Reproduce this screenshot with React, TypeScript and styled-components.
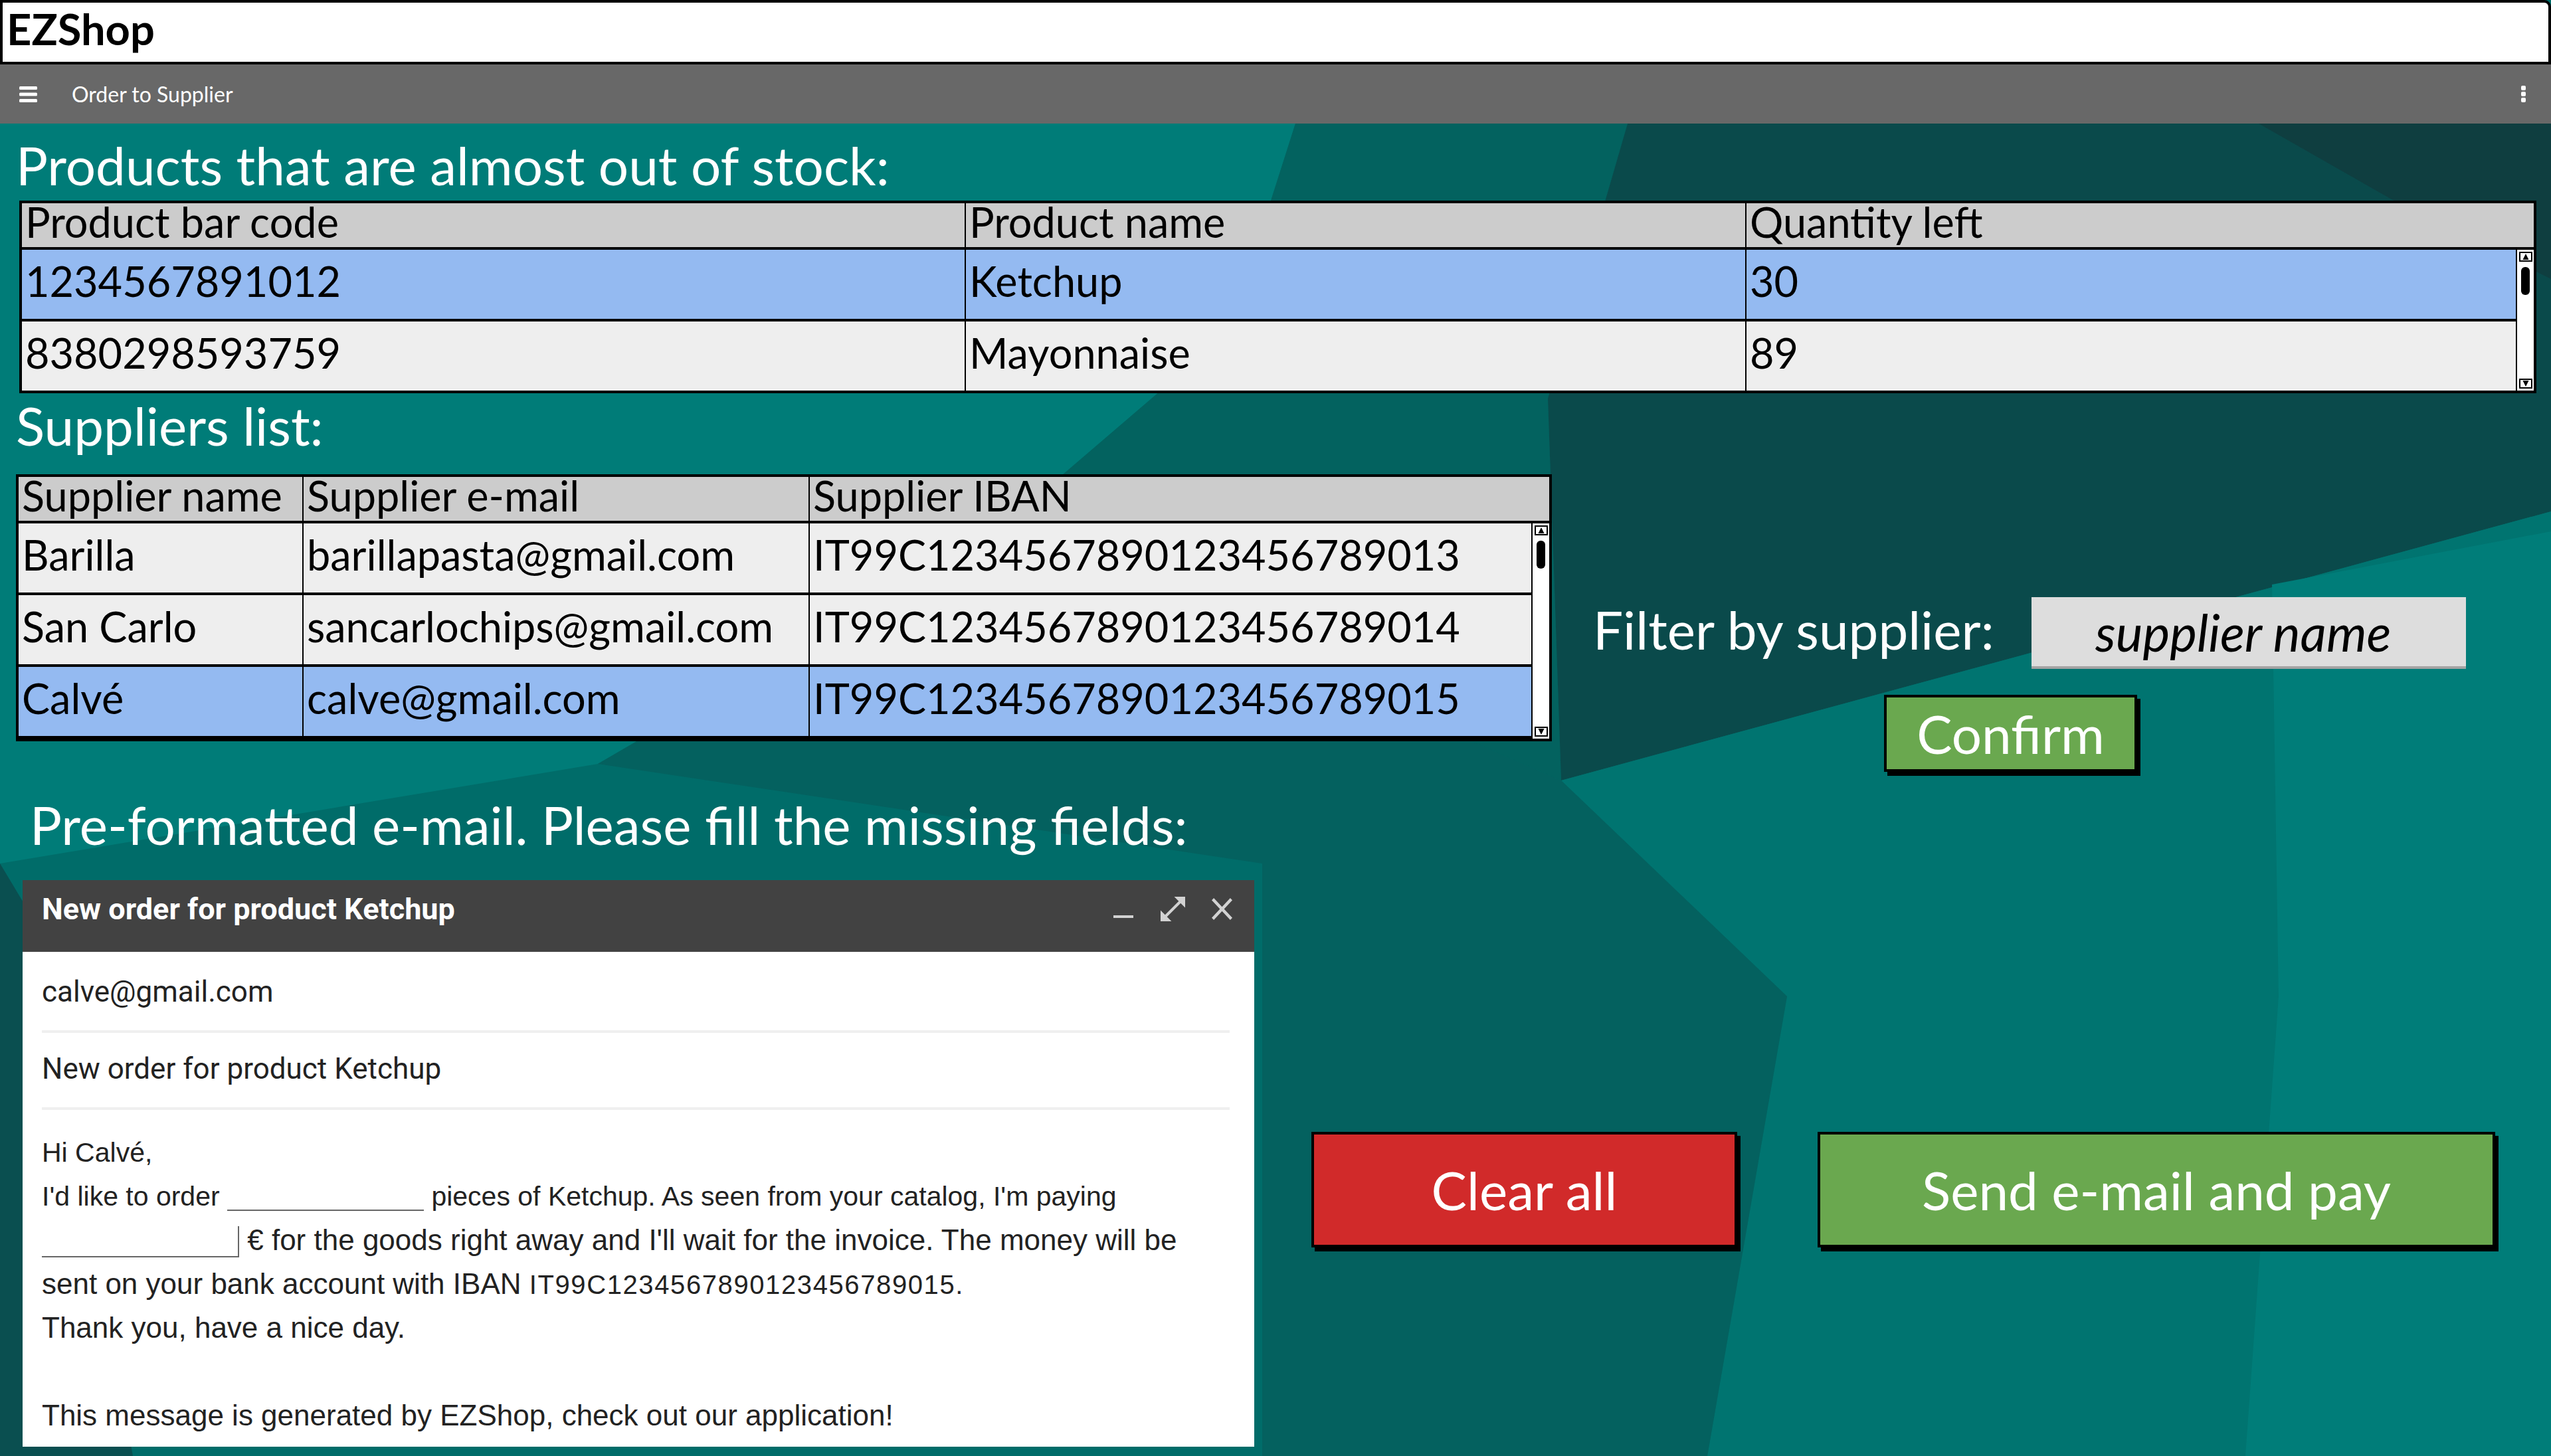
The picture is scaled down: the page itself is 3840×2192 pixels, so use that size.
import React from "react";
import styled, { createGlobalStyle } from "styled-components";

const GlobalStyle = createGlobalStyle`
  html, body { margin: 0; padding: 0; }
  body { background: #006c69; font-family: "Lato", "Liberation Sans", sans-serif; }
  * { box-sizing: border-box; }
`;

const Page = styled.div`
  width: 3840px;
  height: 2192px;
  display: flex;
  flex-direction: column;
  overflow: hidden;
`;

const TitleBar = styled.header`
  height: 97px;
  flex: none;
  background: #fff;
  border: 4px solid #000;
  border-top-right-radius: 10px;
  padding: 0 6px;
  display: flex;
  align-items: flex-start;
`;

const AppName = styled.h1`
  margin: 0;
  font: 700 65px/1.2 "Lato", sans-serif;
  color: #000;
`;

const NavBar = styled.nav`
  height: 89px;
  flex: none;
  background: #686868;
  display: flex;
  align-items: center;
  padding: 0 38px 0 29px;
`;

const NavTitle = styled.span`
  flex: 1;
  margin-left: 52px;
  font: 400 32px "Lato", sans-serif;
  color: #fff;
`;

const Main = styled.main`
  position: relative;
  flex: 1;
`;

const Backdrop = styled.svg`
  position: absolute;
  inset: 0;
  width: 100%;
  height: 100%;
`;

const Content = styled.div`
  position: relative;
  display: flex;
  flex-direction: column;
  align-items: flex-start;
  padding: 14px 0 0 24px;
`;

const SectionTitle = styled.h2<{ $indent?: number }>`
  margin: 0 0 0 ${(p) => p.$indent ?? 0}px;
  font: 400 80px/96px "Lato", sans-serif;
  color: #fff;
  white-space: nowrap;
`;

const Table = styled.div<{ $width: number; $left: number; $top: number }>`
  width: ${(p) => p.$width}px;
  margin: ${(p) => p.$top}px 0 0 ${(p) => p.$left}px;
  border: 4px solid #000;
  background: #eee;
  flex: none;
`;

const Row = styled.div<{ $cols: string; $bg: string }>`
  display: grid;
  grid-template-columns: ${(p) => p.$cols};
  background: ${(p) => p.$bg};
  & + & {
    border-top: 4px solid #000;
  }
`;

const HeadRow = styled(Row)`
  border-bottom: 4px solid #000;
`;

const Cell = styled.div`
  font: 400 63px/94px "Lato", sans-serif;
  color: #000;
  height: 104px;
  padding: 0 0 10px 5px;
  white-space: nowrap;
  & + & {
    border-left: 2px solid #000;
  }
`;

const HeadCell = styled(Cell)`
  height: 66px;
  line-height: 56px;
  padding-bottom: 10px;
`;

const DataArea = styled.div<{ $height?: number }>`
  display: flex;
  height: ${(p) => (p.$height ? `${p.$height}px` : "auto")};
  overflow: hidden;
`;

const Rows = styled.div`
  flex: 1;
  min-width: 0;
`;

const ScrollTrack = styled.div`
  width: 27px;
  flex: none;
  background: #fff;
  border-left: 2px solid #000;
  display: flex;
  flex-direction: column;
  align-items: center;
  padding: 3px 0;
`;

const ScrollArrow = styled.svg`
  width: 20px;
  height: 15px;
  flex: none;
`;

const ScrollThumb = styled.div`
  width: 13px;
  height: 42px;
  margin-top: 8px;
  border-radius: 6px;
  background: #000;
  flex: none;
`;

const ScrollGap = styled.div`
  flex: 1;
`;

const SuppliersRow = styled.div`
  display: flex;
  align-items: flex-start;
`;

const FilterPanel = styled.div`
  margin: 211px 0 0 62px;
  display: flex;
  flex-direction: column;
  align-items: flex-start;
`;

const FilterLine = styled.div`
  display: flex;
  align-items: flex-start;
  gap: 56px;
`;

const FilterLabel = styled.span`
  font: 400 80px/96px "Lato", sans-serif;
  color: #fff;
  white-space: nowrap;
`;

const FilterInput = styled.div`
  width: 654px;
  height: 108px;
  background: #ddd;
  border-bottom: 4px solid #a3a3a3;
  display: flex;
  align-items: center;
  justify-content: center;
  font: italic 400 77px "Lato", sans-serif;
  color: #000;
  padding-right: 16px;
`;

const ActionButton = styled.div<{ $bg: string; $w: number; $h: number }>`
  width: ${(p) => p.$w}px;
  height: ${(p) => p.$h}px;
  flex: none;
  background: ${(p) => p.$bg};
  border: 4px solid #000;
  box-shadow: 5px 6px 0 #000;
  display: flex;
  align-items: center;
  justify-content: center;
  font: 400 80px "Lato", sans-serif;
  color: #fff;
  white-space: nowrap;
`;

const ConfirmWrap = styled.div`
  margin: 39px 0 0 438px;
`;

const BottomRow = styled.div`
  display: flex;
  align-items: flex-start;
  margin-top: 31px;
`;

const EmailColumn = styled.div`
  width: 1864px;
  display: flex;
  flex-direction: column;
  align-items: flex-start;
`;

const ButtonRow = styled.div`
  display: flex;
  gap: 121px;
  margin: 511px 0 0 86px;
`;

const EmailWindow = styled.section`
  width: 1854px;
  height: 853px;
  margin: 36px 0 0 10px;
  background: #fff;
  display: flex;
  flex-direction: column;
`;

const EmailHeader = styled.div`
  height: 108px;
  flex: none;
  background: #424242;
  display: flex;
  align-items: center;
  padding: 0 33px 22px 29px;
`;

const EmailTitle = styled.span`
  flex: 1;
  font: 700 45px "Roboto", "Liberation Sans", sans-serif;
  color: #fff;
  white-space: nowrap;
`;

const WindowIcons = styled.div`
  display: flex;
  align-items: center;
  gap: 40px;
  color: #d2d2d2;
`;

const Field = styled.div<{ $top: number }>`
  margin: 0 37px 0 29px;
  padding: ${(p) => p.$top}px 0 32px;
  border-bottom: 4px solid #efefef;
  font: 400 44px/52px "Roboto", "Liberation Sans", sans-serif;
  color: #222;
  white-space: nowrap;
`;

const EmailBody = styled.div`
  padding: 31px 0 0 29px;
  font-family: "Liberation Sans", Arial, sans-serif;
  color: #222;
`;

const BodyLine = styled.div<{ $size?: number }>`
  font-size: ${(p) => p.$size ?? 44}px;
  line-height: 66px;
  height: 66px;
  white-space: nowrap;
`;

const Blank = styled.span<{ $w: number; $h: number; $drop: number; $bar?: boolean }>`
  display: inline-block;
  width: ${(p) => p.$w}px;
  height: ${(p) => p.$h}px;
  vertical-align: -${(p) => p.$drop}px;
  border-bottom: 2px solid #666;
  border-right: ${(p) => (p.$bar ? "2px solid #666" : "none")};
`;

const Iban = styled.span`
  font-size: 40px;
  letter-spacing: 1.6px;
`;

const HamburgerIcon = () => (
  <svg width="27" height="24" viewBox="0 0 27 24">
    <rect x="0" y="0" width="27" height="5" rx="1.5" fill="#fff" />
    <rect x="0" y="9.5" width="27" height="5" rx="1.5" fill="#fff" />
    <rect x="0" y="19" width="27" height="5" rx="1.5" fill="#fff" />
  </svg>
);

const KebabIcon = () => (
  <svg width="7" height="25" viewBox="0 0 7 25">
    <rect x="0" y="0" width="7" height="7" rx="2" fill="#fff" />
    <rect x="0" y="9" width="7" height="7" rx="2" fill="#fff" />
    <rect x="0" y="18" width="7" height="7" rx="2" fill="#fff" />
  </svg>
);

const Scrollbar = () => (
  <ScrollTrack>
    <ScrollArrow viewBox="0 0 20 15">
      <rect x="1" y="1" width="18" height="13" fill="#fff" stroke="#000" strokeWidth="2" />
      <polygon points="10,3 14.5,12 5.5,12" fill="#000" />
    </ScrollArrow>
    <ScrollThumb />
    <ScrollGap />
    <ScrollArrow viewBox="0 0 20 15">
      <rect x="1" y="1" width="18" height="13" fill="#fff" stroke="#000" strokeWidth="2" />
      <polygon points="5.5,3 14.5,3 10,12" fill="#000" />
    </ScrollArrow>
  </ScrollTrack>
);

const SELECTED = "#94baf1";
const PLAIN = "#eeeeee";
const HEAD = "#cccccc";

const products = [
  { code: "1234567891012", name: "Ketchup", qty: "30", selected: true },
  { code: "8380298593759", name: "Mayonnaise", qty: "89", selected: false },
];

const suppliers = [
  { name: "Barilla", mail: "barillapasta@gmail.com", iban: "IT99C1234567890123456789013", selected: false },
  { name: "San Carlo", mail: "sancarlochips@gmail.com", iban: "IT99C1234567890123456789014", selected: false },
  { name: "Calvé", mail: "calve@gmail.com", iban: "IT99C1234567890123456789015", selected: true },
  { name: "", mail: "", iban: "", selected: false },
];

const PRODUCT_COLS = "1419px 1175px 1fr";
const SUPPLIER_COLS = "427px 762px 1fr";

const Background = () => (
  <Backdrop viewBox="0 186 3840 2006" preserveAspectRatio="none">
    <rect x="0" y="186" width="3840" height="2006" fill="#006c69" />
    <polygon points="0,186 1950,186 1850,500 1500,800 900,1150 0,1300" fill="#007c78" />
    <polygon points="1950,186 2450,186 2330,600 2350,1175 1500,800 1850,500" fill="#03625f" />
    <polygon points="2450,186 3840,186 3840,770 2350,1175 2330,600" fill="#0a4a4b" />
    <polygon points="3400,186 3840,186 3840,420 3600,300" fill="#0f3e40" />
    <polygon points="2350,1175 3840,770 3840,2192 2570,2192 2690,1500" fill="#007470" />
    <polygon points="3420,880 3840,800 3840,2192 3380,2192 3430,1500" fill="#007d79" />
    <polygon points="900,1150 1500,800 2350,1175 2690,1500 2570,2192 1900,2192 1900,1300" fill="#04615f" />
    <polygon points="0,1300 60,1400 200,2192 0,2192" fill="#0a4f50" />
  </Backdrop>
);

export default function App() {
  return (
    <Page>
      <GlobalStyle />
      <TitleBar>
        <AppName>EZShop</AppName>
      </TitleBar>
      <NavBar>
        <HamburgerIcon />
        <NavTitle>Order to Supplier</NavTitle>
        <KebabIcon />
      </NavBar>
      <Main>
        <Background />
        <Content>
          <SectionTitle>Products that are almost out of stock:</SectionTitle>
          <Table $width={3789} $left={5} $top={6}>
            <HeadRow $cols={PRODUCT_COLS} $bg={HEAD}>
              <HeadCell>Product bar code</HeadCell>
              <HeadCell>Product name</HeadCell>
              <HeadCell>Quantity left</HeadCell>
            </HeadRow>
            <DataArea>
              <Rows>
                {products.map((p) => (
                  <Row key={p.code} $cols={PRODUCT_COLS} $bg={p.selected ? SELECTED : PLAIN}>
                    <Cell>{p.code}</Cell>
                    <Cell>{p.name}</Cell>
                    <Cell>{p.qty}</Cell>
                  </Row>
                ))}
              </Rows>
              <Scrollbar />
            </DataArea>
          </Table>

          <SectionTitle>Suppliers list:</SectionTitle>
          <SuppliersRow>
            <Table $width={2312} $left={0} $top={26}>
              <HeadRow $cols={SUPPLIER_COLS} $bg={HEAD}>
                <HeadCell>Supplier name</HeadCell>
                <HeadCell>Supplier e-mail</HeadCell>
                <HeadCell>Supplier IBAN</HeadCell>
              </HeadRow>
              <DataArea $height={324}>
                <Rows>
                  {suppliers.map((s, i) => (
                    <Row key={i} $cols={SUPPLIER_COLS} $bg={s.selected ? SELECTED : PLAIN}>
                      <Cell>{s.name}</Cell>
                      <Cell>{s.mail}</Cell>
                      <Cell>{s.iban}</Cell>
                    </Row>
                  ))}
                </Rows>
                <Scrollbar />
              </DataArea>
            </Table>
            <FilterPanel>
              <FilterLine>
                <FilterLabel>Filter by supplier:</FilterLabel>
                <FilterInput>supplier name</FilterInput>
              </FilterLine>
              <ConfirmWrap>
                <ActionButton $bg="#6aa84f" $w={381} $h={116}>
                  Confirm
                </ActionButton>
              </ConfirmWrap>
            </FilterPanel>
          </SuppliersRow>

          <BottomRow>
            <EmailColumn>
              <SectionTitle $indent={21}>Pre-formatted e-mail. Please fill the missing fields:</SectionTitle>
              <EmailWindow>
                <EmailHeader>
                  <EmailTitle>New order for product Ketchup</EmailTitle>
                  <WindowIcons>
                    <svg width="32" height="36" viewBox="0 0 32 36">
                      <rect x="1" y="28" width="30" height="4" fill="currentColor" />
                    </svg>
                    <svg width="37" height="37" viewBox="3 3 18 18">
                      <path
                        d="M21 11V3h-8l3.29 3.29-10 10L3 13v8h8l-3.29-3.29 10-10z"
                        fill="currentColor"
                      />
                    </svg>
                    <svg width="31" height="33" viewBox="5 5 14 14" preserveAspectRatio="none">
                      <path
                        d="M19 6.41L17.59 5 12 10.59 6.41 5 5 6.41 10.59 12 5 17.59 6.41 19 12 13.41 17.59 19 19 17.59 13.41 12z"
                        fill="currentColor"
                      />
                    </svg>
                  </WindowIcons>
                </EmailHeader>
                <Field $top={34}>calve@gmail.com</Field>
                <Field $top={28}>New order for product Ketchup</Field>
                <EmailBody>
                  <BodyLine $size={41}>Hi Calvé,</BodyLine>
                  <BodyLine $size={41}>
                    I'd like to order <Blank $w={296} $h={10} $drop={8} /> pieces of Ketchup. As seen from your
                    catalog, I'm paying
                  </BodyLine>
                  <BodyLine>
                    <Blank $w={297} $h={47} $drop={11} $bar /> € for the goods right away and I'll wait for the
                    invoice. The money will be
                  </BodyLine>
                  <BodyLine>
                    sent on your bank account with IBAN <Iban>IT99C1234567890123456789015.</Iban>
                  </BodyLine>
                  <BodyLine>Thank you, have a nice day.</BodyLine>
                  <BodyLine />
                  <BodyLine>This message is generated by EZShop, check out our application!</BodyLine>
                </EmailBody>
              </EmailWindow>
            </EmailColumn>
            <ButtonRow>
              <ActionButton $bg="#d12a2a" $w={641} $h={174}>
                Clear all
              </ActionButton>
              <ActionButton $bg="#6aa84f" $w={1020} $h={174}>
                Send e-mail and pay
              </ActionButton>
            </ButtonRow>
          </BottomRow>
        </Content>
      </Main>
    </Page>
  );
}
